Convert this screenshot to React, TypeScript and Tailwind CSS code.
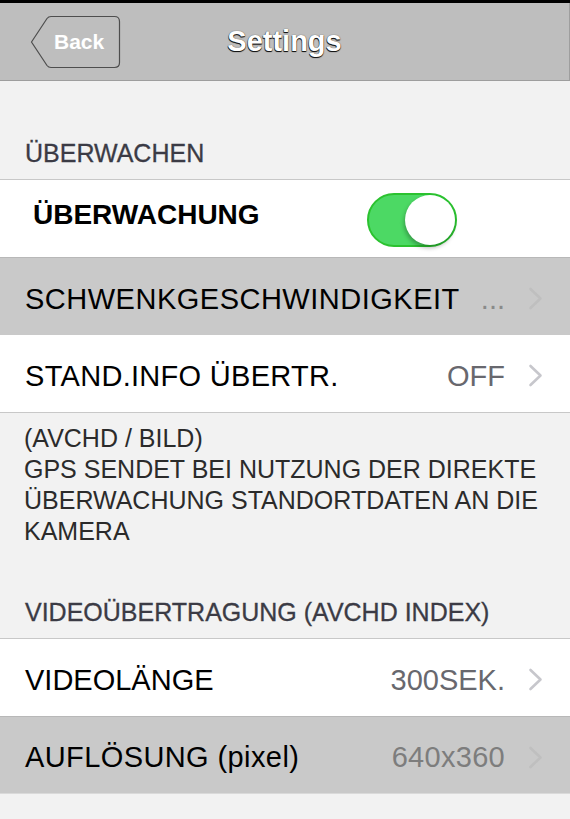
import React from "react";

function Chevron({ color }: { color: string }) {
  return (
    <svg width="15" height="23" viewBox="0 0 15 23" className="ml-[23px] shrink-0">
      <path d="M2.5 2 L12.5 11.5 L2.5 21" fill="none" stroke={color} strokeWidth="2.6" strokeLinecap="round" strokeLinejoin="round" />
    </svg>
  );
}

function Toggle() {
  return (
    <div className="relative ml-auto mr-[113px] mt-[3px] h-[54px] w-[90px] shrink-0 rounded-full border-2 border-[#2bc22f] bg-[#4cd964]">
      <div className="absolute right-0 top-0 h-[50px] w-[50px] rounded-full bg-white shadow-[-1px_3px_4px_rgba(0,0,0,0.28)]" />
    </div>
  );
}

export default function App() {
  return (
    <div className="min-h-screen w-[570px] bg-[#f2f2f2] [font-family:'Liberation_Sans',Arial,sans-serif]">
      <div className="h-[3px] bg-black" />
      <div className="grid h-[78px] grid-cols-[1fr_auto_1fr] items-center border-b border-r border-[#9e9e9e] bg-[#bebebe]">
        <div className="pl-[29px]">
          <div className="relative h-[54px] w-[92px]">
            <svg width="92" height="54" viewBox="0 0 92 54" className="absolute inset-0">
              <path
                d="M2.5 27 L18 3.5 Q19.5 1.5 22 1.5 L85.5 1.5 Q90.5 1.5 90.5 6.5 L90.5 47.5 Q90.5 52.5 85.5 52.5 L22 52.5 Q19.5 52.5 18 50.5 Z"
                fill="none"
                stroke="#4e4e4e"
                strokeWidth="1.2"
              />
            </svg>
            <div className="relative flex h-full items-center pl-[25px] text-[21px] font-bold text-white">Back</div>
          </div>
        </div>
        <div className="text-[29px] font-bold text-white [text-shadow:0_1px_1px_#111,0_0_1px_#333,-0.5px_0.5px_0_#444]">Settings</div>
        <div />
      </div>

      <div className="flex h-[98px] items-end pb-[14px] pl-[25px] text-[25px] leading-[24px] text-[#3b3b45] [-webkit-text-stroke:0.3px_#3b3b45]">
        ÜBERWACHEN
      </div>

      <div className="flex h-[78px] items-center border-t border-[#c8c8c8] bg-white pl-[33px]">
        <span className="mb-[8px] text-[28px] font-bold leading-[32px] text-black">ÜBERWACHUNG</span>
        <Toggle />
      </div>

      <div className="flex h-[78px] items-center border-t border-[#b8b8b8] bg-[#c9c9c9] pl-[25px] pr-[27px] pt-[4px] text-[29px] leading-[34px]">
        <span className="tracking-[0.5px] text-black">SCHWENKGESCHWINDIGKEIT</span>
        <span className="ml-auto text-[#8a8a8a]">...</span>
        <Chevron color="#bfbfbf" />
      </div>

      <div className="flex h-[78px] items-center border-b border-[#c8c8c8] bg-white pl-[25px] pr-[27px] pt-[4px] text-[29px] leading-[34px]">
        <span className="tracking-[0.3px] text-black">STAND.INFO ÜBERTR.</span>
        <span className="ml-auto text-[#68686e]">OFF</span>
        <Chevron color="#c7c7cc" />
      </div>

      <div className="whitespace-nowrap pl-[24px] pt-[10px] text-[25px] leading-[31px] text-[#2b2b2b]">
        <div>(AVCHD / BILD)</div>
        <div>GPS SENDET BEI NUTZUNG DER DIREKTE</div>
        <div>ÜBERWACHUNG STANDORTDATEN AN DIE</div>
        <div>KAMERA</div>
      </div>

      <div className="flex h-[91px] items-end pb-[14px] pl-[25px] text-[25px] leading-[24px] text-[#3b3b45] [-webkit-text-stroke:0.3px_#3b3b45]">
        VIDEOÜBERTRAGUNG (AVCHD INDEX)
      </div>

      <div className="flex h-[78px] items-center border-t border-[#c8c8c8] bg-white pl-[25px] pr-[27px] pt-[4px] text-[29px] leading-[34px]">
        <span className="text-black">VIDEOLÄNGE</span>
        <span className="ml-auto text-[#68686e]">300SEK.</span>
        <Chevron color="#c7c7cc" />
      </div>

      <div className="flex h-[78px] items-center border-b border-t border-b-[#dadada] border-t-[#b8b8b8] bg-[#c9c9c9] pl-[25px] pr-[27px] pt-[4px] text-[29px] leading-[34px]">
        <span className="tracking-[0.4px] text-black">AUFLÖSUNG (pixel)</span>
        <span className="ml-auto tracking-[0.3px] text-[#7d7d7d]">640x360</span>
        <Chevron color="#bfbfbf" />
      </div>
    </div>
  );
}
